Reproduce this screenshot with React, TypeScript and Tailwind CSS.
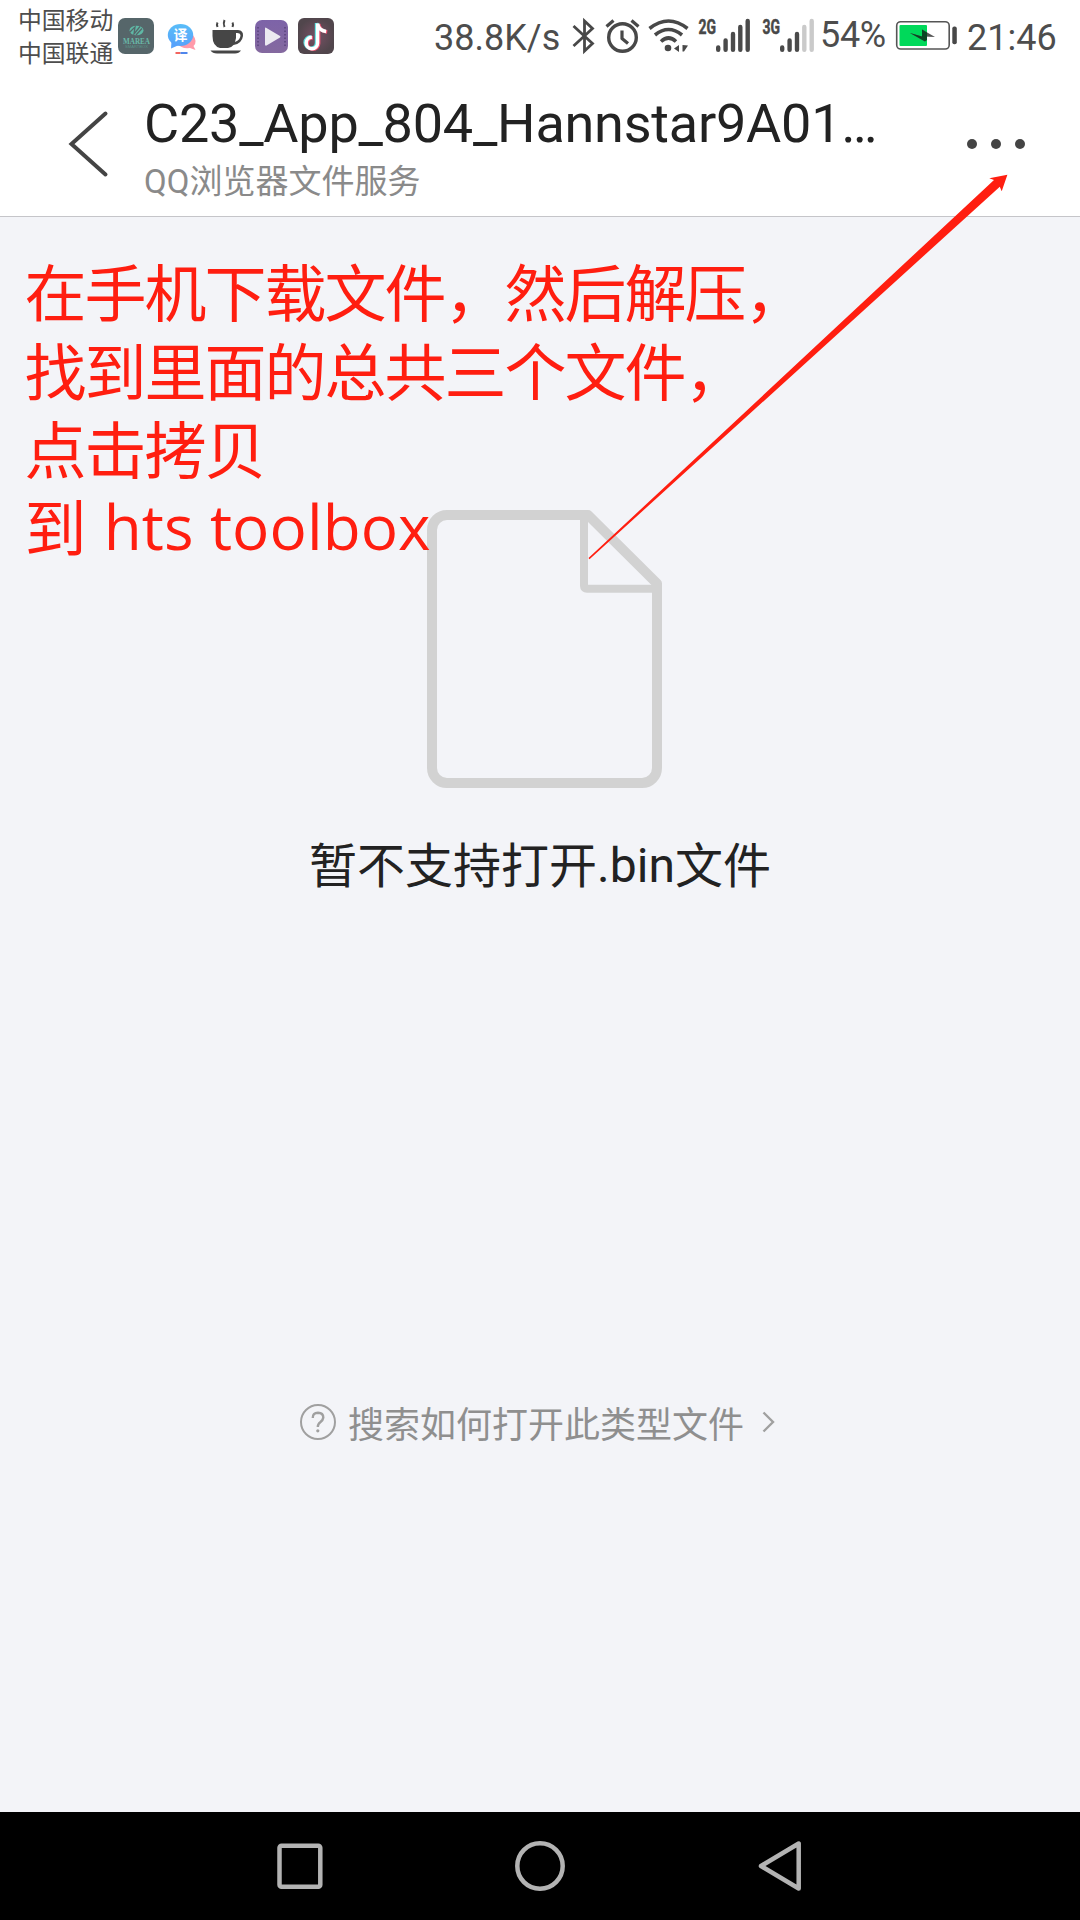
const roboto = "font-['Roboto','Noto_Sans_CJK_SC',sans-serif]";

function AppTray() {
  return (
    <svg viewBox="118 0 216 72" className="ml-1 h-[72px] w-[216px] shrink-0">
      <defs>
        <linearGradient id="bubble" x1="0" y1="0" x2="0" y2="1">
          <stop offset="0" stopColor="#59bdf8" />
          <stop offset="1" stopColor="#57a3fb" />
        </linearGradient>
        <linearGradient id="violet" x1="0" y1="0" x2="0" y2="1">
          <stop offset="0" stopColor="#7d63a8" />
          <stop offset="1" stopColor="#84699f" />
        </linearGradient>
        <radialGradient id="plum">
          <stop offset="0" stopColor="#775064" />
          <stop offset="1" stopColor="#51464c" />
        </radialGradient>
      </defs>
      <rect x="118" y="18" width="36" height="36" rx="7" fill="#56666a" />
      <ellipse cx="136.5" cy="30.500" rx="7" ry="4.800" fill="#5fb8a5" />
      <path d="M129 33 L135 27 L134 34 L140 26.500 M136 35 L142 28.500" stroke="#56666a" strokeWidth="1.300" fill="none" />
      <text x="123" y="43.500" textLength="27" lengthAdjust="spacingAndGlyphs" fontSize="9" fontFamily="Liberation Serif, serif" fontWeight="bold" fill="#69b9a8">MAREA</text>
      <text x="125" y="47.500" textLength="23" lengthAdjust="spacingAndGlyphs" fontSize="3.500" fontFamily="Liberation Sans, sans-serif" fill="#5b9389">SMARTBOX</text>

      <path d="M193 35 Q198 42 193.500 46 L195.500 50 L190 48 Q181 49 178 44 Z" fill="#ff9aaa" />
      <ellipse cx="180.500" cy="35" rx="12.700" ry="11" fill="url(#bubble)" />
      <path d="M171.500 41 L171 48.500 L179 45Z" fill="#57a3fb" />
      <text x="173.500" y="39.800" fontSize="14" fontFamily="Noto Sans CJK SC, sans-serif" fontWeight="bold" fill="#fff">译</text>
      <path d="M175.500 53 h5" stroke="#f2645f" strokeWidth="2" />
      <path d="M180.500 53 h7" stroke="#4f86ec" strokeWidth="2" />

      <g fill="#464646">
        <path d="M212.500 30 H238 Q243.500 30.500 243 36 Q242 43.500 233.500 45 Q231 48 228 48 H220 Q212.500 46 212.500 36 Z M236 33 Q236.500 38 235 42 Q240.500 40 240.500 35 Q240 32.500 236 33Z" fillRule="evenodd" />
        <path d="M210.500 50.500 H241 Q239 53.500 235 53.500 H217 Q212.500 53.500 210.500 50.500Z" />
      </g>
      <path d="M217.500 22.500 q-1 2 0 4.500 M224.500 20 q-1.500 3.500 0 7 M232.500 22.500 q1 2 0 4.500" stroke="#464646" strokeWidth="2" fill="none" />

      <rect x="255" y="20" width="33" height="33" rx="7" fill="url(#violet)" />
      <path d="M258 27 V47 M285 27 V47" stroke="#59437c" strokeWidth="1.500" strokeDasharray="1.500 2" />
      <path d="M265 28.500 Q265 27 266.500 28 L280 36 Q281 36.800 280 37.500 L266.500 45.500 Q265 46 265 44.500Z" fill="#ece9f1" />

      <rect x="298" y="18" width="36" height="36" rx="6" fill="url(#plum)" />
      <g fill="none" strokeWidth="3.400">
        <path d="M316.500 23 V42.500 a5.700 5.700 0 1 1 -5.700 -5.700 M316.500 23 q1 7 8.500 8" stroke="#62e5e4" />
        <path d="M318.700 24 V43.500 a5.700 5.700 0 1 1 -5.700 -5.700 M318.700 24 q1 7 8.500 8" stroke="#ef5574" />
        <path d="M317.600 23.500 V43 a5.700 5.700 0 1 1 -5.700 -5.700 M317.600 23.500 q1 7 8.500 8" stroke="#fff" />
      </g>
    </svg>
  );
}

function Bars({ weak }: { weak?: boolean }) {
  return (
    <g strokeWidth="4.400" strokeLinecap="round" stroke="#4a4a4a">
      <path d="M2.200 47.500 V49.700 M9.600 40.500 V49.700 M17 34 V49.700" />
      <path d="M24.300 27 V49.700 M31.700 21 V49.700" stroke={weak ? "#cacaca" : "#4a4a4a"} />
    </g>
  );
}

function Radios() {
  return (
    <svg viewBox="570 0 246 72" className="h-[72px] w-[246px] shrink-0">
      <g fill="none" stroke="#484848">
        <path d="M573.500 26 L592.500 43.500 L584.500 51 V21 L592.500 28.500 L573.500 46" strokeWidth="2.800" />
        <circle cx="622.500" cy="37.500" r="13.800" strokeWidth="3.400" />
        <path d="M622 30.500 V38.500 L628 43.500" strokeWidth="3.200" strokeLinejoin="round" />
        <path d="M606.500 26.500 L613.500 20.500 M631.500 20.500 L638.500 26.500" strokeWidth="3.200" />
        <g strokeWidth="3.600">
          <path d="M649.500 28.500 Q668.500 13.500 687.500 28.500" />
          <path d="M655 35 Q668.500 24 682 35" />
          <path d="M661 41.500 Q668.500 34.500 676 41.500" />
        </g>
      </g>
      <circle cx="668" cy="48" r="3.300" fill="#484848" />
      <path d="M679 45 V52 L674 48.500Z M682.500 45 L688 45.500 L684 51.500 H682.500Z" fill="#484848" />
      <g fontFamily="Roboto, sans-serif" fontWeight="bold" fontSize="20" fill="#484848" stroke="#484848" strokeWidth="0.500">
        <text x="698.500" y="33.700" textLength="17.500" lengthAdjust="spacingAndGlyphs">2G</text>
        <text x="762.500" y="33.700" textLength="17.500" lengthAdjust="spacingAndGlyphs">3G</text>
      </g>
      <g transform="translate(716 0)"><Bars /></g>
      <g transform="translate(780 0)"><Bars weak /></g>
    </svg>
  );
}

function StatusBar() {
  return (
    <div className="flex h-[72px] items-start text-[#4d4d4d]">
      <div className="ml-[18px] mt-[5px] w-[96px] shrink-0 whitespace-nowrap text-[23.800px] leading-[33px]">
        <div>中国移动</div>
        <div>中国联通</div>
      </div>
      <AppTray />
      <div className="ml-auto flex items-start">
        <span className="mt-[20px] w-[136px] shrink-0 whitespace-nowrap text-[36px] leading-[36px]">38.8K/s</span>
        <Radios />
        <span className="ml-[4px] mr-[1px] mt-[16.500px] w-[72px] shrink-0 text-[36px] leading-[36px] tracking-[-0.300px]">54%</span>
        <svg viewBox="893 0 70 72" className="h-[72px] w-[70px] shrink-0">
          <rect x="896.700" y="21.700" width="52.500" height="27.300" rx="4" fill="none" stroke="#555" strokeWidth="1.600" />
          <rect x="899.500" y="25" width="27.500" height="21" rx="1" fill="#00d95a" />
          <path d="M910 33 L922 36.500 L922 29.500 L935 37 L923.500 36.500 L925 41.500Z" fill="#555" />
          <path d="M910 33 L922 36.500 L922 29.500 L927 32.500 V40 L925 41.500 L918 37.500Z" fill="#0a4723" />
          <rect x="952.300" y="26.500" width="4.500" height="17.800" rx="2" fill="#484848" />
        </svg>
        <span className="mr-[25px] mt-[20px] w-[92px] shrink-0 pl-[4px] text-[36px] leading-[36px]">21:46</span>
      </div>
    </div>
  );
}

function Header() {
  return (
    <header className="flex h-[145px] items-start border-b border-[#c5c5c9]">
      <svg viewBox="66 108 44 72" className="ml-[66px] mt-[36px] h-[72px] w-[44px] shrink-0">
        <path d="M105.500 113.500 L71.500 144 L105.500 174.500" fill="none" stroke="#444" strokeWidth="4" strokeLinecap="round" />
      </svg>
      <div className="ml-[34px] w-[823px] pt-[24.500px]">
        <h1 className="whitespace-nowrap text-[54px] leading-[54px] tracking-[-0.230px] text-[#222]">C23_App_804_Hannstar9A01…</h1>
        <p className="mt-[14px] text-[33px] leading-[33px] text-[#8a8a8a]">QQ浏览器文件服务</p>
      </div>
      <div className="mt-[67px] flex gap-[14px]">
        <i className="size-[10px] rounded-full bg-[#444]" />
        <i className="size-[10px] rounded-full bg-[#444]" />
        <i className="size-[10px] rounded-full bg-[#444]" />
      </div>
    </header>
  );
}

function NavBar() {
  return (
    <nav className="flex h-[108px] items-center justify-center gap-[192px] bg-black">
      <svg viewBox="0 0 50 50" className="size-[50px]" fill="none" stroke="#b3b3b3" strokeWidth="4.500">
        <rect x="6.500" y="4.700" width="40.800" height="41" rx="2" />
      </svg>
      <svg viewBox="0 0 50 50" className="size-[50px]" fill="none" stroke="#b3b3b3" strokeWidth="4.500">
        <circle cx="25" cy="25" r="22.700" />
      </svg>
      <svg viewBox="757 1841 50 50" className="size-[50px]" fill="none" stroke="#b3b3b3" strokeWidth="4.500" strokeLinejoin="round">
        <path d="M798.700 1843.500 V1888.500 L761 1866Z" />
      </svg>
    </nav>
  );
}

export default function App() {
  return (
    <div className={`relative flex h-[1920px] w-[1080px] flex-col overflow-hidden bg-white ${roboto}`}>
      <StatusBar />
      <Header />
      <main className="flex flex-1 flex-col items-center bg-[#f3f4f8]">
        <svg viewBox="0 0 235 278" className="ml-[9px] mt-[293px] h-[278px] w-[235px]" fill="none" stroke="#d2d2d2" strokeLinejoin="round">
          <path strokeWidth="10" d="M161 5 H20 A15 15 0 0 0 5 20 V258 A15 15 0 0 0 20 273 H215 A15 15 0 0 0 230 258 V73.500 Z" />
          <path strokeWidth="8" d="M157 6 V76 Q157 78.700 160 78.700 H228" />
        </svg>
        <p className="mt-[54px] h-[48px] text-[48px] leading-[48px] text-[#222]">
          暂不支持打开<span className="align-[1px] leading-none">.bin</span>文件
        </p>
        <a className="mr-[3px] mt-[518px] flex h-[36px] items-center text-[36px] leading-[36px] text-[#8f8f8f]">
          <svg viewBox="299 1403 38 38" className="-mt-[8px] size-[38px]" fill="none" stroke="#a0a0a0" strokeWidth="2">
            <circle cx="318" cy="1422" r="17" />
            <path d="M312.800 1418 Q312.500 1413 318 1412.800 Q323.300 1413 323.300 1417.500 Q323 1420 320.500 1422 Q317.800 1424 317.800 1427" strokeWidth="2.400" />
            <circle cx="317.800" cy="1430.800" r="1.600" fill="#a0a0a0" stroke="none" />
          </svg>
          <span className="ml-[11px]">搜索如何打开此类型文件</span>
          <svg viewBox="760 1409 18 26" className="-mt-[8px] ml-[16px] h-[26px] w-[18px]" fill="none" stroke="#a0a0a0" strokeWidth="2.400">
            <path d="M763.500 1412.500 L773 1422 L763.500 1431.500" />
          </svg>
        </a>
      </main>
      <NavBar />

      <div className="absolute left-[24.500px] top-[254.400px] whitespace-nowrap font-['Open_Sans','Noto_Sans_CJK_SC',sans-serif] text-[62px] leading-[78.200px] tracking-[-2px] text-[#ff1e10]">
        <div>在手机下载文件，然后解压，</div>
        <div>找到里面的总共三个文件，</div>
        <div>点击拷贝</div>
        <div>
          到<span className="ml-[3px] align-[2px] leading-none tracking-[0.100px]"> hts toolbox</span>
        </div>
      </div>
      <svg viewBox="580 165 440 405" className="pointer-events-none absolute left-[580px] top-[165px] h-[405px] w-[440px]">
        <path d="M588.500 558 L994 180 L989.300 178.300 L1007.400 174.800 L1001.700 191.200 L999.800 186.800 L589.500 559.200Z" fill="#ff1e10" />
      </svg>
    </div>
  );
}
